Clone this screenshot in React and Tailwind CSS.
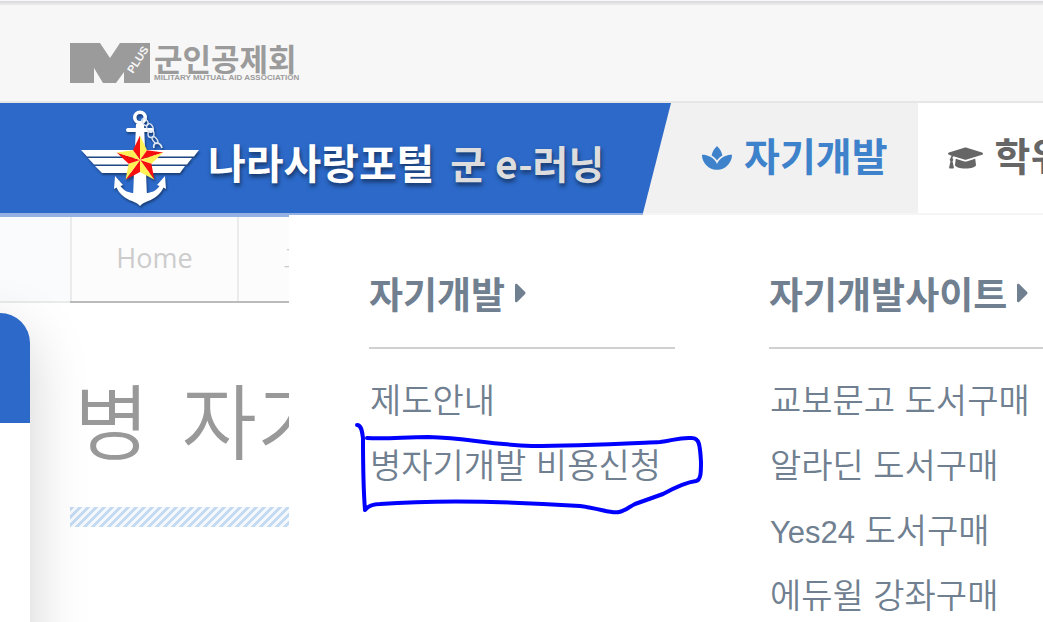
import { FaSpa, FaGraduationCap, FaCaretRight } from 'react-icons/fa';

const navItems = [
  { icon: FaSpa, label: '자기개발', active: true },
  { icon: FaGraduationCap, label: '학위', active: false },
];

const menuColumns = [
  { title: '자기개발', links: [{ text: '제도안내' }, { text: '병자기개발 비용신청', marked: true }] },
  {
    title: '자기개발사이트',
    links: [
      { text: '교보문고 도서구매' },
      { text: '알라딘 도서구매' },
      { latin: 'Yes24', text: ' 도서구매' },
      { text: '에듀윌 강좌구매' },
    ],
  },
];

// Five-pointed star, each point split into a red and a yellow facet
function starFacets(cx, cy, outer, inner) {
  const at = (r, deg) => {
    const a = (deg * Math.PI) / 180;
    return `${(cx + r * Math.cos(a)).toFixed(2)},${(cy + r * Math.sin(a)).toFixed(2)}`;
  };
  return [0, 1, 2, 3, 4].flatMap((i) => {
    const deg = -90 + i * 72;
    return [
      { points: `${cx},${cy} ${at(inner, deg - 36)} ${at(outer, deg)}`, fill: '#f60f0f' },
      { points: `${cx},${cy} ${at(outer, deg)} ${at(inner, deg + 36)}`, fill: '#fff056' },
    ];
  });
}

function Emblem() {
  return (
    <svg viewBox="0 0 120 98" className="h-[98px] w-[120px] shrink-0 drop-shadow-[1px_2px_1px_rgba(0,0,0,0.4)]" aria-hidden="true">
      <g fill="#fff">
        <path d="M1 41H119L114 47.5H7Z" />
        <path d="M8 49H112L107 55.5H14Z" />
        <path d="M15 57H105L100 64H22Z" />
        <path d="M56 15H64L67 88H53Z" />
        <rect x="46" y="19" width="28" height="4" rx="2" />
        <path d="M35 67L43 76L40.5 77C44 82 49 84 54 84H66C71 84 76 82 79.5 77L77 76L85 67L86 80L83.5 78.5C80 86 74 90 68 92C64 93.5 62 95 60 97C58 95 56 93.5 52 92C46 90 40 86 36.5 78.5L34 80Z" />
      </g>
      <circle cx="60" cy="8.5" r="5.25" fill="none" stroke="#fff" strokeWidth="3.5" />
      <g fill="none" stroke="#dce6f5" strokeWidth="1.4">
        <ellipse cx="65" cy="13" rx="2.5" ry="4" transform="rotate(-35 65 13)" />
        <ellipse cx="70" cy="19" rx="3" ry="4.5" transform="rotate(-25 70 19)" />
        <ellipse cx="71" cy="25" rx="3" ry="3.5" />
        <ellipse cx="75" cy="31" rx="2" ry="4" transform="rotate(-35 75 31)" />
        <path d="M74 39C72 33 80 32 82 39" strokeWidth="1.8" />
      </g>
      {starFacets(60, 51, 24.5, 12).map((f) => (
        <polygon key={f.points} points={f.points} fill={f.fill} />
      ))}
    </svg>
  );
}

function AssociationLogo() {
  return (
    <a href="#" className="flex items-center gap-1 text-[#9b9b9b]">
      <svg viewBox="0 0 80 40" className="h-10 w-20 shrink-0" aria-hidden="true">
        <rect width="80" height="40" fill="#9b9b9b" />
        <path d="M30 0H50L40 15ZM24 25L33 40H24ZM54 29V40H46Z" fill="#f7f7f7" />
        <text
          x="63"
          y="31"
          transform="rotate(-57 63 31)"
          fill="#f7f7f7"
          fontFamily="Liberation Sans, sans-serif"
          fontSize="11"
          fontWeight="700"
        >
          PLUS
        </text>
      </svg>
      <span className="flex flex-col whitespace-nowrap font-bold">
        <span className="text-[31px] leading-[30px]">군인공제회</span>
        <span className="font-['Liberation_Sans',sans-serif] text-[8px] leading-[10px]">MILITARY MUTUAL AID ASSOCIATION</span>
      </span>
    </a>
  );
}

// Hand-drawn loop round one menu entry
function PenMark() {
  return (
    <svg
      viewBox="0 0 350 95"
      className="pointer-events-none absolute -left-4 -top-3.5 h-[95px] w-[350px]"
      fill="none"
      stroke="#0000ff"
      strokeWidth="4"
      strokeLinecap="round"
      strokeLinejoin="round"
      aria-hidden="true"
    >
      <path d="M3 5C7 5 8 10 9 18C9 45 9 65 11 90C14 86 19 84 26 84C80 80 150 81 226 86C248 89 258 94 265 92C271 91 275 87 281 84L309 74C320 68 334 62 342 61C347 60 347 52 347 42C346 24 345 18 338 18C325 17 318 21 306 22C260 24 220 26 178 26C130 24 115 18 74 17C50 17 35 19 13 18" />
    </svg>
  );
}

function MegaMenu() {
  return (
    <div className="absolute bottom-0 left-[289px] right-0 top-[2px] flex gap-[94px] overflow-hidden bg-white pl-20 pt-[52px] text-[#708090]">
      {menuColumns.map((col) => (
        <section key={col.title} className="w-[306px] shrink-0">
          <h2 className="border-b-2 border-[#d0d0d0] pb-7 text-[37px] font-bold leading-[52px]">
            <a href="#" className="flex items-center whitespace-nowrap">
              {col.title}
              <FaCaretRight className="size-8" />
            </a>
          </h2>
          <ul className="pl-px pt-5 font-['Liberation_Sans','Noto_Sans_CJK_KR',sans-serif] text-[34px] font-[350] leading-[65px]">
            {col.links.map((link) => (
              <li key={link.text} className="relative h-[65px] whitespace-nowrap">
                <a href="#" className="whitespace-pre">
                  {link.latin && <span className="text-[31px]">{link.latin}</span>}
                  {link.text}
                </a>
                {link.marked && <PenMark />}
              </li>
            ))}
          </ul>
        </section>
      ))}
    </div>
  );
}

export default function App() {
  return (
    <div className="flex min-h-screen flex-col overflow-hidden bg-white font-['Noto_Sans_CJK_KR',sans-serif]">
      <header>
        <div className="bg-[#f7f7f7] pt-px">
          <div className="border-b-2 border-t-2 border-b-[#e6e6e6] border-t-[#dbdce0]">
            <div className="border-t-2 border-[#e8e8e8] pb-[18px] pl-[70px] pt-[38px]">
              <AssociationLogo />
            </div>
          </div>
        </div>
        <nav className="flex h-[110px] bg-white">
          <a
            href="#"
            className="z-10 flex w-[671px] shrink-0 items-center bg-[#2c69c8] pl-20 [clip-path:polygon(0_0,100%_0,643px_100%,0_100%)]"
          >
            <Emblem />
            <span className="flex items-center gap-4 whitespace-nowrap pl-2 pt-2 text-[41px] font-bold text-white [text-shadow:1px_3px_4px_rgba(0,0,0,0.5)]">
              나라사랑포털
              <span className="text-[39px] text-[#dddddd]">군 e-러닝</span>
            </span>
          </a>
          {navItems.map(({ icon: Icon, label, active }) => (
            <a
              key={label}
              href="#"
              className={`flex shrink-0 items-center gap-3 whitespace-nowrap pr-[30px] text-[39px] font-bold ${
                active ? '-ml-7 bg-[#f1f1f1] pl-[59px] text-[#3e82cb]' : 'pl-[30px] text-[#666666]'
              }`}
            >
              <Icon className={active ? 'size-[30px]' : 'h-7 w-[35px]'} />
              <span className="pb-2">{label}</span>
            </a>
          ))}
        </nav>
      </header>

      <main className="relative flex-1">
        <div className="h-1 bg-[#94afe1]" />
        <div className="flex border-b-2 border-[#e9ebeb] bg-[#f9fbfd] pl-[70px]">
          <ol className="-mb-[2px] flex flex-1 border-b-2 border-[#bbbbbb] bg-[#fcfcfc] text-[27px] font-light leading-[82px] text-[#cccccc]">
            <li className="w-[169px] border-x-2 border-[#ebebeb] pb-0.5 text-center font-['Open_Sans',sans-serif] font-normal">
              <a href="#">Home</a>
            </li>
            <li className="pl-11">
              <a href="#">고</a>
            </li>
          </ol>
        </div>
        <div className="pl-[70px] pt-[50px]">
          <h1 className="flex gap-8 whitespace-nowrap pl-1 text-[82px] font-[350] leading-[130px] text-[#999999]">
            <span>병</span>
            <span>자기</span>
          </h1>
          <div className="mt-6 h-5 bg-[linear-gradient(135deg,#c4daf0_25%,#f5f9fd_25%_50%,#c4daf0_50%_75%,#f5f9fd_75%)] bg-size-[8px_8px]" />
        </div>

        {/* Floating side panel, mostly off the left edge */}
        <aside className="absolute -bottom-20 -left-[170px] top-[100px] w-[200px] rounded-tr-[30px] bg-white shadow-[0_20px_60px_rgba(0,0,0,0.18)]">
          <div className="h-[110px] rounded-tr-[30px] bg-[#2c69c8]" />
        </aside>

        <MegaMenu />
        <div className="absolute left-[643px] right-0 top-0 h-[2px] bg-[#f5f5f5]" />
      </main>
    </div>
  );
}
